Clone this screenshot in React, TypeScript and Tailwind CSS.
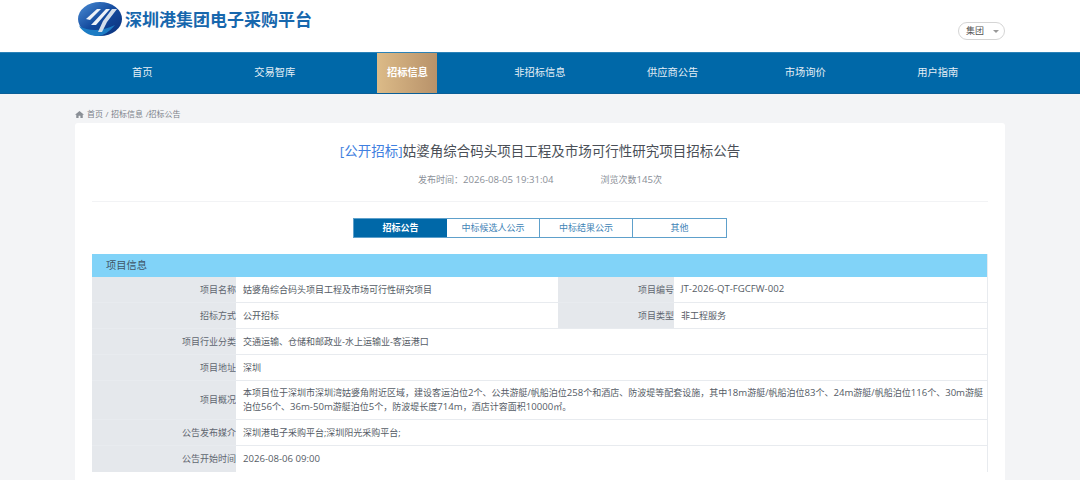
import type { ReactNode } from 'react';

const FONT = "font-['Open_Sans','Noto_Sans_CJK_SC',sans-serif]";

const navItems = ['首页', '交易智库', '招标信息', '非招标信息', '供应商公告', '市场询价', '用户指南'];
const tabs = ['招标公告', '中标候选人公示', '中标结果公示', '其他'];

// latin runs sit a bit larger than the cjk around them in the reference
const Lat = ({ children }: { children: ReactNode }) => <span className="text-[9.6px]">{children}</span>;

const Logo = () => (
  <svg width="44" height="36" viewBox="0 0 44 36" className="shrink-0">
    <defs>
      <linearGradient id="ball" x1="0" y1="0" x2="1" y2="1">
        <stop offset="0" stopColor="#4d8fd6" />
        <stop offset="0.5" stopColor="#134a9e" />
        <stop offset="1" stopColor="#0a2f78" />
      </linearGradient>
    </defs>
    <ellipse cx="22" cy="18" rx="22" ry="17" fill="url(#ball)" />
    <path d="M1 25c9 5 22 6 36-1-6 7-12 11-17 11C11 35 5 31 1 25z" fill="#1c7cc4" />
    <path d="M8 18 19 8h4L12 19z" fill="#eef2f8" />
    <path d="M13 24 28 8h4L18 24z" fill="#eef2f8" />
    <path d="M20 31 25 20 34 8h5L29 21l-5 10z" fill="#d3deeb" />
  </svg>
);

const Row = ({ label, children, className = 'h-[26px]' }: { label: string; children: ReactNode; className?: string }) => (
  <div className={`flex border-b border-[#e8ebef] last:border-b-0 ${className}`}>
    <div className="w-[144px] shrink-0 bg-[#e5e8ec] flex items-center justify-end text-[#5f6670]">{label}</div>
    <div className="flex-1 pl-[7px] pr-[4px] flex items-center leading-[14px] text-[#555c66] bg-white">
      <p>{children}</p>
    </div>
  </div>
);

const HalfRow = ({ a, b, c, d }: { a: string; b: string; c: string; d: ReactNode }) => (
  <div className="flex h-[26px] border-b border-[#e8ebef]">
    <div className="w-[144px] shrink-0 bg-[#e5e8ec] flex items-center justify-end text-[#5f6670]">{a}</div>
    <div className="w-[322px] shrink-0 px-[7px] flex items-center text-[#555c66]">{b}</div>
    <div className="w-[116px] shrink-0 bg-[#e5e8ec] flex items-center justify-end text-[#5f6670]">{c}</div>
    <div className="flex-1 px-[7px] flex items-center text-[#555c66]">{d}</div>
  </div>
);

export default function App() {
  return (
    <div className={`${FONT} h-[480px] overflow-hidden bg-[#f3f4f6]`}>
      <header className="h-[52px] bg-white relative">
        <div className="ml-[78px] flex items-center gap-[3px] h-[38px]">
          <Logo />
          <span className="text-[17px] leading-none font-bold text-[#1767ad] whitespace-nowrap">深圳港集团电子采购平台</span>
        </div>
        <div className="absolute left-[958px] top-[22px] w-[47px] h-[18px] rounded-full border border-[#d5d5d5] flex items-center pl-[7px] text-[9px] text-[#555]">
          集团
          <span className="ml-[9px] w-0 h-0 border-x-[3px] border-x-transparent border-t-[3px] border-t-[#999]" />
        </div>
      </header>

      <nav className="h-[42px] bg-[#0068a8] border-t border-[#2a82b8] border-b border-b-[#0a5f98]">
        <div className="mx-[76px] grid grid-cols-7 h-full text-[10.25px] text-[#e6eff6]">
          {navItems.map((item) => (
            <div key={item} className="flex justify-center">
              {item === '招标信息' ? (
                <span className="w-[60px] flex items-center justify-center font-bold text-white bg-gradient-to-r from-[#dcbb88] to-[#b8926a]">{item}</span>
              ) : (
                <span className="flex items-center">{item}</span>
              )}
            </div>
          ))}
        </div>
      </nav>

      <div className="mx-[75px]">
        <div className="h-[29px] pt-[11px] flex items-center text-[8px] text-[#7b818a] gap-[3px] [word-spacing:0.5px]">
          <svg width="9" height="9" viewBox="0 0 10 10" fill="#8a8f96">
            <path d="M5 1 0 5.2h1.4V9h2.6V6.4h2V9h2.6V5.2H10z" />
          </svg>
          <span>首页 / 招标信息 /招标公告</span>
        </div>

        <main className="bg-white rounded-t-[3px] px-[17px] h-[400px]">
          <h1 className="pt-[17px] text-center text-[13.5px] leading-[22px] text-[#4a4f57]">
            <span className="text-[#3f7fe0]">[公开招标]</span>姑婆角综合码头项目工程及市场可行性研究项目招标公告
          </h1>
          <div className="mt-[10px] pb-[14px] border-b border-[#f2f3f5] flex justify-center gap-[47px] text-[9px] leading-[15px] text-[#8a8f98]">
            <span>{'发布时间\uFF1A'}<Lat>2026-08-05 19:31:04</Lat></span>
            <span>浏览次数<Lat>145</Lat>次</span>
          </div>

          <div className="mt-[16px] flex justify-center">
            <div className="flex h-[20px] border border-[#5ea0cb] text-[9px] text-[#3f84b6]">
              {tabs.map((tab, i) => (
                <div
                  key={tab}
                  className={
                    i === 0
                      ? 'w-[93px] flex items-center justify-center bg-[#0068a8] text-white font-bold'
                      : `w-[93px] flex items-center justify-center ${i < 3 ? 'border-r border-[#5ea0cb]' : ''}`
                  }
                >
                  {tab}
                </div>
              ))}
            </div>
          </div>

          <section className="mt-[16px] border-r border-[#e8ebef] text-[9px]">
            <div className="h-[23px] bg-[#81d3f8] flex items-center pl-[14px] text-[10.25px] text-[#3f5566]">项目信息</div>
            <HalfRow a="项目名称" b="姑婆角综合码头项目工程及市场可行性研究项目" c="项目编号" d={<Lat>JT-2026-QT-FGCFW-002</Lat>} />
            <HalfRow a="招标方式" b="公开招标" c="项目类型" d="非工程服务" />
            <Row label="项目行业分类">交通运输、仓储和邮政业-水上运输业-客运港口</Row>
            <Row label="项目地址">深圳</Row>
            <Row className="h-[39px]" label="项目概况">
              {'本项目位于深圳市深圳湾姑婆角附近区域\uFF0C建设客运泊位'}<Lat>2</Lat>个、公共游艇/帆船泊位<Lat>258</Lat>{'个和酒店、防波堤等配套设施\uFF0C其中'}<Lat>18m</Lat>游艇/帆船泊位<Lat>83</Lat>个、<Lat>24m</Lat>游艇/帆船泊位<Lat>116</Lat>个、<Lat>30m</Lat>游艇<br />泊位<Lat>56</Lat>个、<Lat>36m-50m</Lat>{'游艇泊位'}<Lat>5</Lat>{'个\uFF0C防波堤长度'}<Lat>714m</Lat>{'\uFF0C酒店计容面积'}<Lat>10000</Lat>㎡。
            </Row>
            <Row label="公告发布媒介">深圳港电子采购平台;深圳阳光采购平台;</Row>
            <Row label="公告开始时间"><Lat>2026-08-06 09:00</Lat></Row>
          </section>
        </main>
      </div>
    </div>
  );
}
